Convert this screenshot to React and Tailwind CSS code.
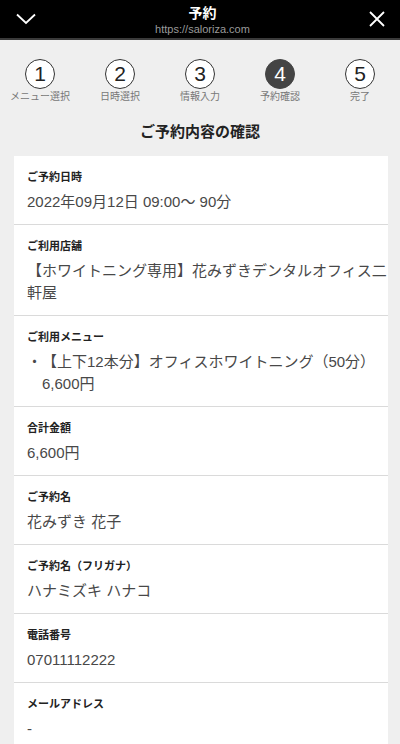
const steps = [
  { no: 1, label: "メニュー選択" },
  { no: 2, label: "日時選択" },
  { no: 3, label: "情報入力" },
  { no: 4, label: "予約確認", active: true },
  { no: 5, label: "完了" },
];

const rows = [
  { label: "ご予約日時", value: "2022年09月12日 09:00〜 90分" },
  { label: "ご利用店舗", lines: ["【ホワイトニング専用】花みずきデンタルオフィス二", "軒屋"] },
  { label: "ご利用メニュー", menu: true },
  { label: "合計金額", value: "6,600円" },
  { label: "ご予約名", value: "花みずき 花子" },
  { label: "ご予約名（フリガナ）", value: "ハナミズキ ハナコ" },
  { label: "電話番号", value: "07011112222" },
  { label: "メールアドレス", value: "-" },
];

const font = "font-['Liberation_Sans','Noto_Sans_CJK_JP',sans-serif]";

const Header = () => (
  <header className="flex h-[40px] items-center justify-between border-b-2 border-[#3a3a3a] bg-black px-4">
    <svg width="20" height="12" viewBox="0 0 20 12">
      <path d="M1 1.5 L10 10 L19 1.5" fill="none" stroke="#fff" strokeWidth="1.8" />
    </svg>
    <div className="mt-[3px] flex flex-col items-center leading-none">
      <span className="text-[14px] font-bold text-white">予約</span>
      <span className="mt-[4px] text-[11px] text-[#9a9a9a]">https://saloriza.com</span>
    </div>
    <svg width="16" height="16" viewBox="0 0 16 16" className="mr-[-1px]">
      <path d="M1 1 L15 15 M15 1 L1 15" fill="none" stroke="#fff" strokeWidth="1.8" />
    </svg>
  </header>
);

const Steps = () => (
  <div className="grid grid-cols-5 pt-[19px]">
    {steps.map((s) => (
      <div key={s.no} className="flex flex-col items-center">
        <div
          className={
            s.active
              ? "flex h-[30px] w-[30px] items-center justify-center rounded-full border border-[#444] bg-[#444] text-[21px] text-white"
              : "flex h-[30px] w-[30px] items-center justify-center rounded-full border border-[#333] bg-white text-[21px] text-[#222]"
          }
        >
          {s.no}
        </div>
        <span className="mt-[1px] text-[10px] leading-[14px] text-[#777]">{s.label}</span>
      </div>
    ))}
  </div>
);

export default function App() {
  return (
    <div className={`${font} min-h-[744px] bg-[#efefef] pb-6`}>
      <Header />
      <Steps />
      <h1 className="mt-[17px] text-center text-[15px] font-semibold leading-[22px] text-[#222]">
        ご予約内容の確認
      </h1>
      <div className="ml-[14px] mr-[12px] mt-[13px] bg-white">
        {rows.map((r, i) => (
          <div
            key={r.label}
            className={`px-[13px] pt-[13px] pb-[11px] ${i > 0 ? "border-t border-[#dadada]" : ""}`}
          >
            <div className="text-[11px] font-bold leading-[16px] text-[#222]">{r.label}</div>
            {r.menu ? (
              <div className="mt-[6px] flex text-[15px] leading-[22px] text-[#484848]">
                <span className="w-[15px] shrink-0">・</span>
                <div>
                  <div>【上下12本分】オフィスホワイトニング（50分）</div>
                  <div>6,600円</div>
                </div>
              </div>
            ) : r.lines ? (
              <div className="mt-[6px] text-[15px] leading-[22px] text-[#484848]">
                {r.lines.map((l) => (
                  <div key={l} className="whitespace-nowrap">{l}</div>
                ))}
              </div>
            ) : (
              <div className="mt-[6px] text-[15px] leading-[22px] text-[#484848]">{r.value}</div>
            )}
          </div>
        ))}
      </div>
    </div>
  );
}
